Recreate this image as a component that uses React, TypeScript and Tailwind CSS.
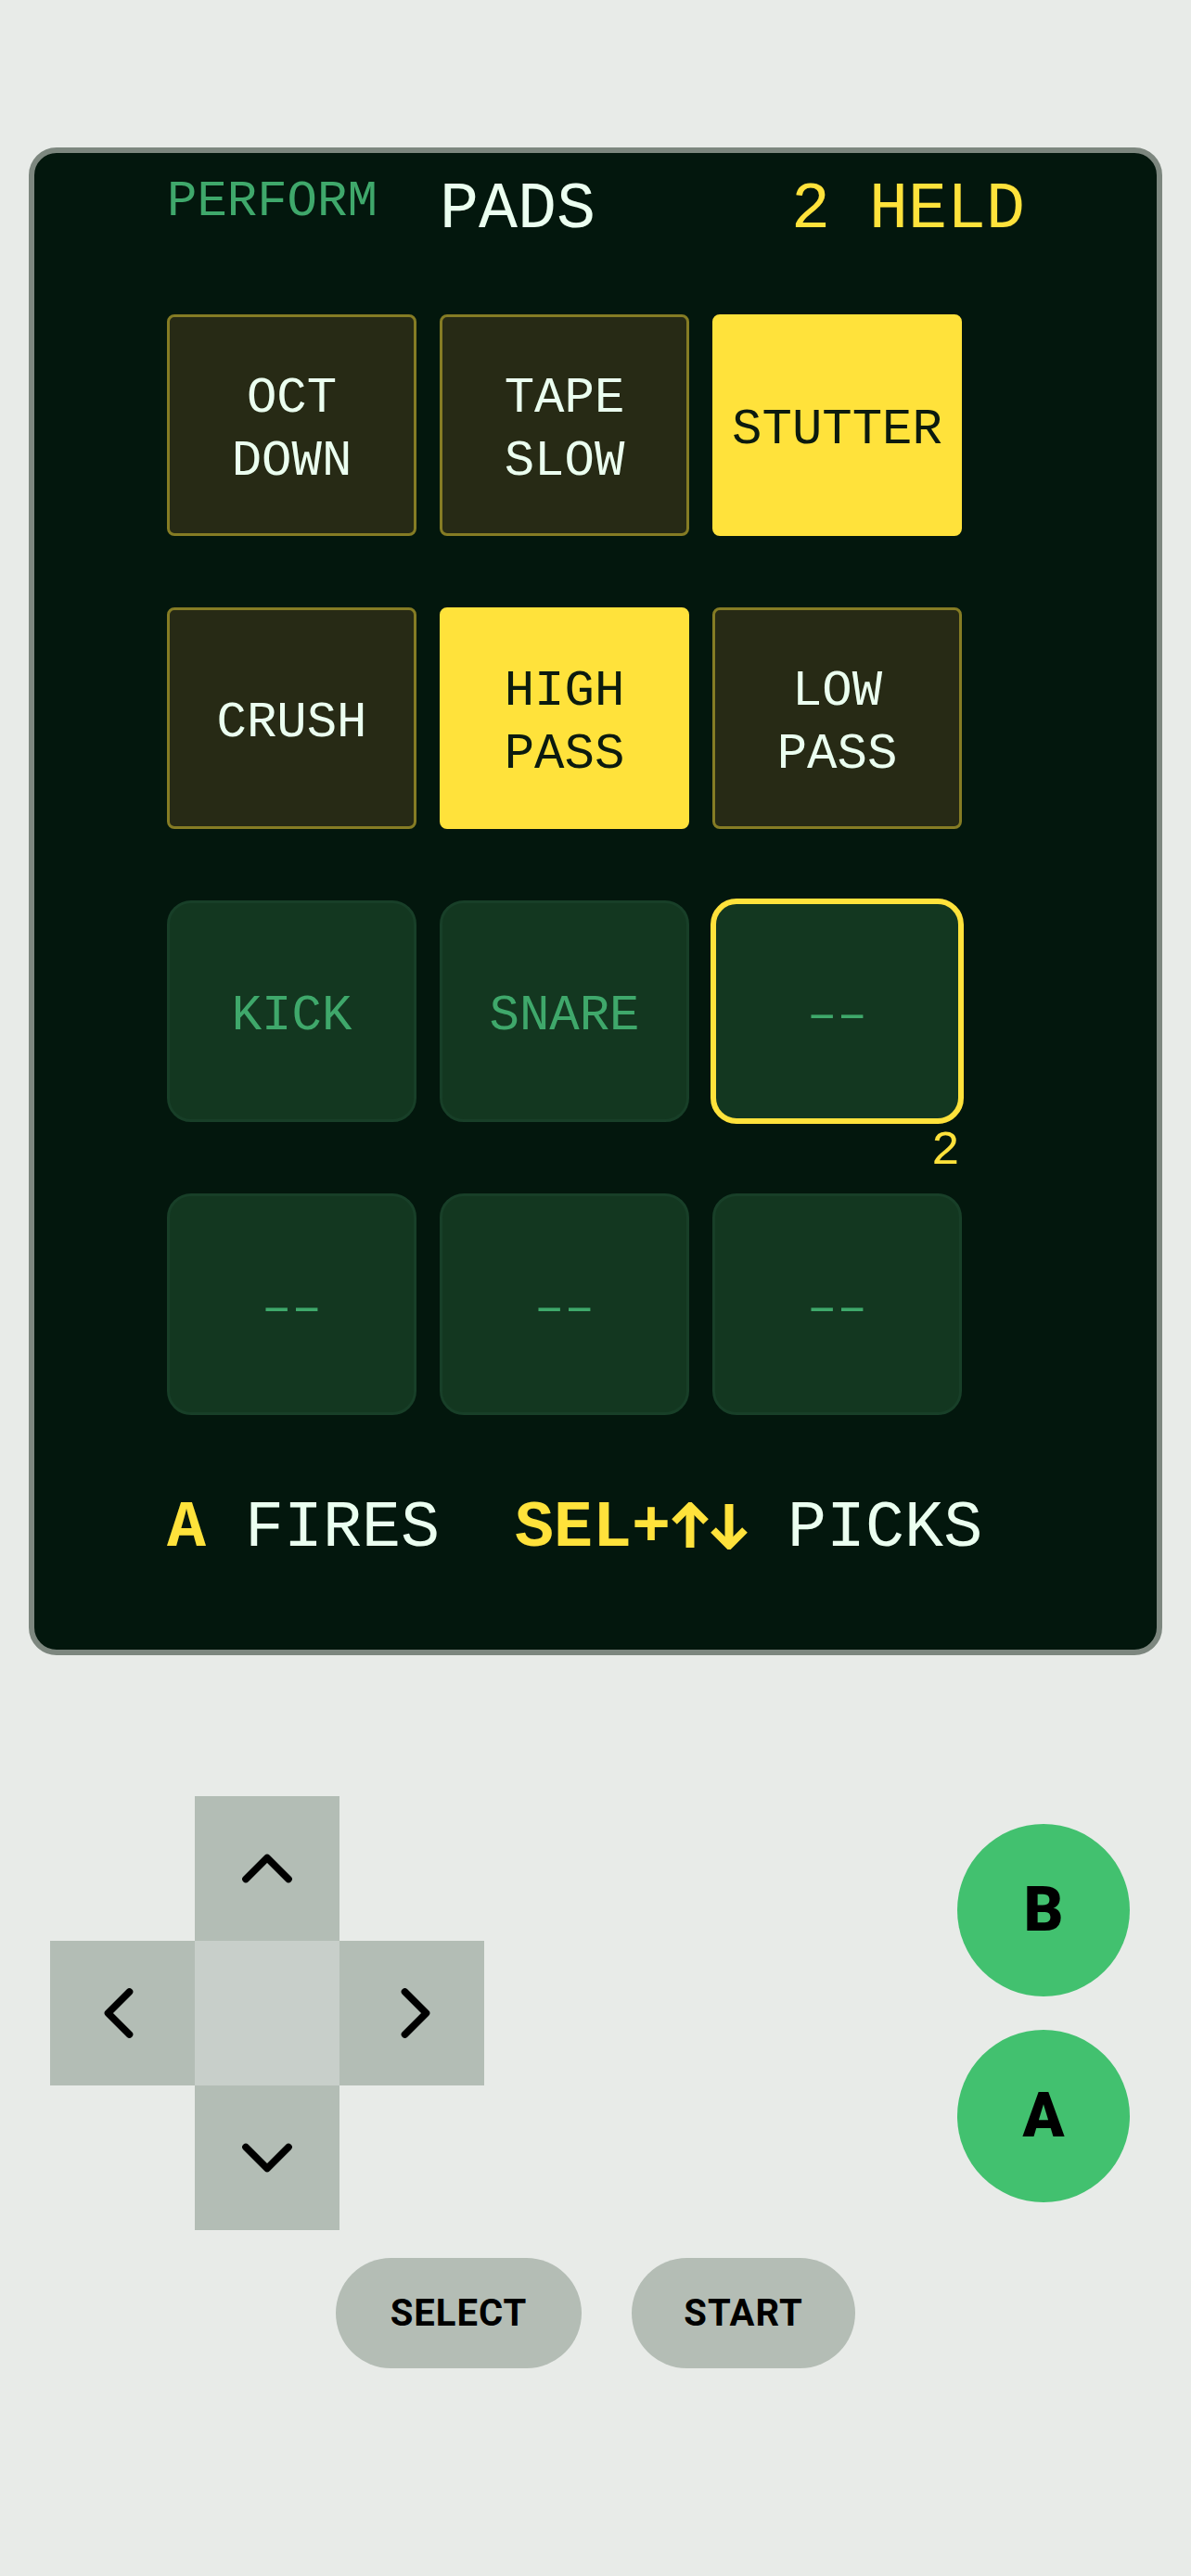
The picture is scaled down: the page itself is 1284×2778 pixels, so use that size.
import { ChevronUp, ChevronDown, ChevronLeft, ChevronRight } from 'lucide-react';

type Pad = {
  label: string[];
  kind: 'fx' | 'sample';
  on?: boolean;
  picked?: boolean;
};

const EMPTY = '––';

const pads: Pad[] = [
  { label: ['OCT', 'DOWN'], kind: 'fx' },
  { label: ['TAPE', 'SLOW'], kind: 'fx' },
  { label: ['STUTTER'], kind: 'fx', on: true },
  { label: ['CRUSH'], kind: 'fx' },
  { label: ['HIGH', 'PASS'], kind: 'fx', on: true },
  { label: ['LOW', 'PASS'], kind: 'fx' },
  { label: ['KICK'], kind: 'sample' },
  { label: ['SNARE'], kind: 'sample' },
  { label: [EMPTY], kind: 'sample', picked: true },
  { label: [EMPTY], kind: 'sample' },
  { label: [EMPTY], kind: 'sample' },
  { label: [EMPTY], kind: 'sample' },
];

const mono = "font-['Liberation_Mono',monospace]";

function PadCell({ pad }: { pad: Pad }) {
  let box = '';
  let text = '';
  if (pad.kind === 'fx') {
    box = pad.on
      ? 'h-[239px] bg-[#ffe23b] border-[3px] border-[#ffe23b] rounded-[8px]'
      : 'h-[239px] bg-[#272a15] border-[3px] border-[#857c24] rounded-[8px]';
    text = pad.on ? 'text-[#0b1a0f]' : 'text-[#ebfff0]';
  } else {
    box = pad.picked
      ? 'h-[243px] -m-[2px] bg-[#133720] border-[6px] border-[#ffe23b] rounded-[28px]'
      : 'h-[239px] bg-[#133720] border-[3px] border-[#183f28] rounded-[26px]';
    text = 'text-[#3fa86b]';
  }

  return (
    <div className="relative">
      <div className={`flex flex-col items-center justify-center pt-[10px] ${box}`}>
        {pad.label.map((line) => (
          <span key={line} className={`${mono} ${text} text-[54px] leading-[68px]`}>
            {line}
          </span>
        ))}
      </div>
      {pad.picked && (
        <span className={`${mono} absolute right-[2px] top-full mt-[6px] text-[52px] leading-none text-[#ffe23b]`}>
          2
        </span>
      )}
    </div>
  );
}

// bold up / down arrow used in the hint line
function Arrow({ down }: { down?: boolean }) {
  return (
    <span className="w-[42px] flex justify-center self-start mt-[6px]">
      <svg
        width="40"
        height="49"
        viewBox="0 0 40 49"
        className={down ? 'rotate-180 translate-y-[2px]' : ''}
      >
        <line x1="20" y1="5" x2="20" y2="49" stroke="#ffe23b" strokeWidth="9" />
        <polyline
          points="3,21 20,4 37,21"
          fill="none"
          stroke="#ffe23b"
          strokeWidth="8"
          strokeLinejoin="miter"
        />
      </svg>
    </span>
  );
}

function Screen() {
  return (
    <div className="mx-[31px] w-[1222px] h-[1626px] border-[6px] border-[#7d877f] rounded-[30px] bg-[#03170d] pt-[26px] pl-[143px]">
      {/* Header */}
      <div className={`${mono} flex items-start w-[925px] leading-none`}>
        <span className="w-[294px] text-[54px] text-[#3fa86b]">PERFORM</span>
        <span className="text-[70px] mt-[1px] text-[#ebfff0]">PADS</span>
        <span className="ml-auto text-[70px] mt-[1px] text-[#ffe23b]">2 HELD</span>
      </div>

      {/* Pad grid */}
      <div className="mt-[77px] grid grid-cols-[269px_269px_269px] gap-x-[25px] gap-y-[77px]">
        {pads.map((pad, i) => (
          <PadCell key={i} pad={pad} />
        ))}
      </div>

      {/* Hint line */}
      <div className={`${mono} mt-[88px] flex gap-[81px] text-[70px] leading-none text-[#ebfff0] whitespace-pre`}>
        <span>
          <b className="font-bold text-[#ffe23b]">A</b> FIRES
        </span>
        <span className="flex">
          <b className="font-bold text-[#ffe23b]">SEL+</b>
          <Arrow />
          <Arrow down />
          <span> PICKS</span>
        </span>
      </div>
    </div>
  );
}

function DPad() {
  const arm = 'w-[156px] h-[156px] bg-[#b3bdb5] flex items-center justify-center text-black';
  return (
    <div className="grid grid-cols-[156px_156px_156px] grid-rows-[156px_156px_156px]">
      <div />
      <div className={arm}>
        <ChevronUp size={92} strokeWidth={2} />
      </div>
      <div />
      <div className={arm}>
        <ChevronLeft size={92} strokeWidth={2} className="-translate-x-[4px]" />
      </div>
      <div className="bg-[#c8cfca]" />
      <div className={arm}>
        <ChevronRight size={92} strokeWidth={2} className="translate-x-[4px]" />
      </div>
      <div />
      <div className={arm}>
        <ChevronDown size={92} strokeWidth={2} />
      </div>
      <div />
    </div>
  );
}

function RoundButton({ label }: { label: string }) {
  return (
    <div className="w-[186px] h-[186px] rounded-full bg-[#42c16f] flex items-center justify-center font-['Roboto',sans-serif] font-black text-[66px] leading-none text-black">
      {label}
    </div>
  );
}

function PillButton({ label, width }: { label: string; width: string }) {
  return (
    <div
      className={`${width} h-[119px] rounded-full bg-[#b4bdb5] flex items-center justify-center font-['Roboto',sans-serif] font-bold text-[40px] tracking-[1px] text-black`}
    >
      {label}
    </div>
  );
}

export default function App() {
  return (
    <div className="min-h-[2778px] bg-[#e8ebe8] pt-[159px]">
      <Screen />

      <div className="mt-[152px] flex items-center justify-between pl-[54px] pr-[66px]">
        <DPad />
        <div className="flex flex-col gap-[36px]">
          <RoundButton label="B" />
          <RoundButton label="A" />
        </div>
      </div>

      <div className="mt-[30px] flex justify-center gap-[54px]">
        <PillButton label="SELECT" width="w-[265px]" />
        <PillButton label="START" width="w-[241px]" />
      </div>
    </div>
  );
}
